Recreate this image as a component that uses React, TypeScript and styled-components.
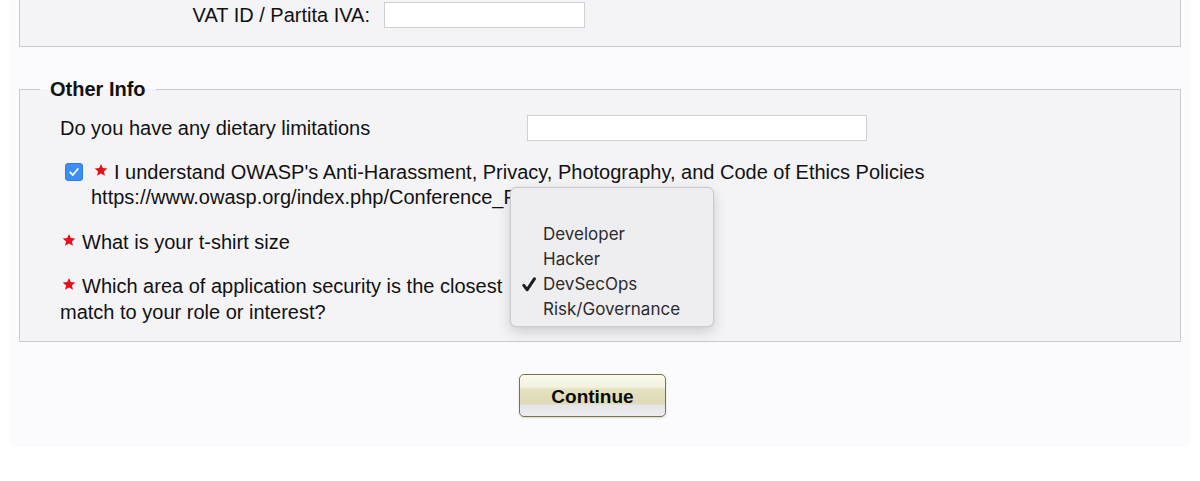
import * as React from 'react';
import styled, { createGlobalStyle } from 'styled-components';

const GlobalStyle = createGlobalStyle`
  html, body {
    margin: 0;
    padding: 0;
    background: #ffffff;
  }
  body {
    font-family: "Liberation Sans", Arial, sans-serif;
    color: #111111;
  }
`;

const Page = styled.div`
  position: relative;
  margin-left: 10px;
  width: 1180px;
  background: #fbfbfd;
  padding-bottom: 30px;
  overflow: hidden;
`;

const TopSection = styled.div`
  margin: 0 9px;
  background: #f4f4f6;
  border: 1px solid #cacacd;
  border-top: none;
  padding: 2px 0 18px 0;
`;

const FieldRow = styled.div<{ $labelWidth: number; $inputWidth: number }>`
  display: grid;
  grid-template-columns: ${(p) => p.$labelWidth}px ${(p) => p.$inputWidth}px;
  column-gap: 14px;
  align-items: center;
  font-size: 20px;
`;

const RightLabel = styled.div`
  text-align: right;
`;

const TextInput = styled.div`
  height: 24px;
  background: #ffffff;
  border: 1px solid #cfcfd2;
`;

const Fieldset = styled.fieldset`
  margin: 31px 9px 0 9px;
  padding: 0;
  background: #f4f4f6;
  border: 1px solid #cacacd;
  min-width: 0;
`;

const Legend = styled.legend`
  margin-left: 20px;
  padding: 0 10px;
  font-size: 20px;
  line-height: 23px;
  font-weight: bold;
  color: #111111;
`;

const FieldsetBody = styled.div`
  padding: 12px 0 16px 40px;
`;

const DietRow = styled(FieldRow)`
  height: 30px;
`;

const CheckRow = styled.div`
  display: flex;
  align-items: flex-start;
  margin-top: 17px;
  font-size: 20px;
  line-height: 25px;
`;

const CheckCell = styled.div`
  width: 31px;
  flex: none;
  padding-top: 3px;
  padding-left: 5px;
  box-sizing: border-box;
`;

const CheckBox = styled.span`
  display: flex;
  align-items: center;
  justify-content: center;
  width: 18px;
  height: 18px;
  border-radius: 4px;
  background: #3a8ef6;
  box-shadow: inset 0 0 0 1px #2f7fe6;
`;

const CheckText = styled.div`
  width: 1000px;
`;

const QuestionRow = styled.div<{ $lineHeight: number; $top: number }>`
  display: grid;
  grid-template-columns: 453px 340px;
  column-gap: 14px;
  margin-top: ${(p) => p.$top}px;
  font-size: 20px;
  line-height: ${(p) => p.$lineHeight}px;
`;

const StarMark = styled.svg<{ $left: number; $right: number }>`
  width: 14px;
  height: 14px;
  margin-left: ${(p) => p.$left}px;
  margin-right: ${(p) => p.$right}px;
  vertical-align: 2px;
`;

const Menu = styled.div`
  position: absolute;
  left: 500px;
  top: 187px;
  width: 202px;
  padding: 9px 0 4px 0;
  background: #eeeef0;
  border: 1px solid #cbcbce;
  border-radius: 6px;
  box-shadow: 0 5px 14px rgba(0, 0, 0, 0.16), 0 0 2px rgba(0, 0, 0, 0.08);
  font-family: Inter, "Noto Sans", sans-serif;
  font-size: 17px;
  color: #2b2b2b;
`;

const MenuItem = styled.div`
  position: relative;
  height: 25px;
  line-height: 25px;
  padding-left: 32px;
`;

const MenuCheck = styled.svg`
  position: absolute;
  left: 11px;
  top: 5px;
  width: 14px;
  height: 15px;
`;

const ButtonRow = styled.div`
  display: flex;
  padding-left: 509px;
  margin-top: 32px;
`;

const ContinueButton = styled.button`
  width: 147px;
  height: 43px;
  border: 1px solid #77734e;
  border-radius: 5px;
  background: linear-gradient(
    to bottom,
    #fbf9ec 0%,
    #f3f1de 30%,
    #e5e2c2 34%,
    #dedab5 70%,
    #e6e6ea 74%,
    #ececf0 100%
  );
  box-shadow: 0 1px 2px rgba(0, 0, 0, 0.15);
  font-family: "Liberation Sans", Arial, sans-serif;
  font-size: 19px;
  font-weight: bold;
  color: #0a0a0a;
  padding: 3px 0 0 0;
  cursor: pointer;
`;

const Star = ({ left = 0, right = 6 }: { left?: number; right?: number }) => (
  <StarMark $left={left} $right={right} viewBox="0 0 24 24">
    <path
      d="M12 1.5l3.1 7.2 7.8.6-5.9 5.1 1.8 7.6L12 17.9 5.2 22l1.8-7.6L1.1 9.3l7.8-.6z"
      fill="#e8101a"
    />
  </StarMark>
);

const options = ['', 'Developer', 'Hacker', 'DevSecOps', 'Risk/Governance'];

const App = () => {
  return (
    <>
      <GlobalStyle />
      <Page>
        <TopSection>
          <FieldRow $labelWidth={350} $inputWidth={201}>
            <RightLabel>VAT ID / Partita IVA:</RightLabel>
            <TextInput />
          </FieldRow>
        </TopSection>

        <Fieldset>
          <Legend>Other Info</Legend>
          <FieldsetBody>
            <DietRow $labelWidth={453} $inputWidth={340}>
              <div>Do you have any dietary limitations</div>
              <TextInput />
            </DietRow>

            <CheckRow>
              <CheckCell>
                <CheckBox>
                  <svg width="12" height="12" viewBox="0 0 12 12">
                    <path d="M2.2 6.4l2.6 2.6 5-6" fill="none" stroke="#fff" strokeWidth="1.8" strokeLinecap="round" strokeLinejoin="round" />
                  </svg>
                </CheckBox>
              </CheckCell>
              <CheckText>
                <Star left={3} right={6} />I understand OWASP's Anti-Harassment, Privacy, Photography, and Code of Ethics Policies{' '}
                https://www.owasp.org/index.php/Conference_Policies
              </CheckText>
            </CheckRow>

            <QuestionRow $lineHeight={26} $top={19}>
              <div>
                <Star left={2} right={6} />What is your t-shirt size
              </div>
              <div />
            </QuestionRow>

            <QuestionRow $lineHeight={26} $top={18}>
              <div>
                <Star left={2} right={6} />Which area of application security is the closest match to your role or interest?
              </div>
              <div />
            </QuestionRow>
          </FieldsetBody>
        </Fieldset>

        <ButtonRow>
          <ContinueButton type="button">Continue</ContinueButton>
        </ButtonRow>

        <Menu>
          {options.map((option, index) => (
            <MenuItem key={option + '_' + index}>
              {option === 'DevSecOps' ? (
                <MenuCheck viewBox="0 0 14 15">
                  <path d="M1.8 8.4l3.4 4.3L12.4 1.8" fill="none" stroke="#1e1e1e" strokeWidth="3" strokeLinecap="round" strokeLinejoin="round" />
                </MenuCheck>
              ) : null}
              {option}
            </MenuItem>
          ))}
        </Menu>
      </Page>
    </>
  );
};

export default App;
